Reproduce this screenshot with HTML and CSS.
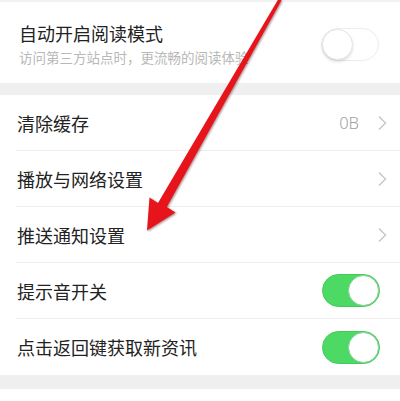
FILE: index.html
```html
<!DOCTYPE html>
<html lang="zh-CN">
<head>
<meta charset="utf-8">
<title>设置</title>
<link rel="stylesheet" href="styles.css">
</head>
<body>
<div class="page">
  <div class="band band-top"></div>
  <section class="group">
    <div class="reader">
      <div class="reader-text">
        <div class="title">自动开启阅读模式</div>
        <div class="subtitle">访问第三方站点时，更流畅的阅读体验</div>
      </div>
      <span class="switch switch-off"><span class="knob"></span></span>
    </div>
  </section>
  <div class="band"></div>
  <section class="group">
    <div class="row">
      <span class="label">清除缓存</span>
      <span class="value">0B</span>
      <svg class="chev" viewBox="0 0 10 16" width="10" height="16"><path d="M2 1.5 L8.5 8 L2 14.5" fill="none" stroke="#c9c9c9" stroke-width="1.5"/></svg>
    </div>
    <div class="row">
      <span class="label">播放与网络设置</span>
      <svg class="chev" viewBox="0 0 10 16" width="10" height="16"><path d="M2 1.5 L8.5 8 L2 14.5" fill="none" stroke="#c9c9c9" stroke-width="1.5"/></svg>
    </div>
    <div class="row">
      <span class="label">推送通知设置</span>
      <svg class="chev" viewBox="0 0 10 16" width="10" height="16"><path d="M2 1.5 L8.5 8 L2 14.5" fill="none" stroke="#c9c9c9" stroke-width="1.5"/></svg>
    </div>
    <div class="row row-switch">
      <span class="label">提示音开关</span>
      <span class="switch switch-on"><span class="knob"></span></span>
    </div>
    <div class="row row-switch row-last">
      <span class="label">点击返回键获取新资讯</span>
      <span class="switch switch-on"><span class="knob"></span></span>
    </div>
  </section>
  <div class="band band-bottom"></div>
  <div class="tail"></div>

  <svg class="arrow" viewBox="0 0 400 401" width="400" height="401">
    <polygon points="279,-2 282.8,-2 166.8,207 175.5,212.5 147,230.5 149.5,197.5 158,203" fill="#e8141b"/>
  </svg>
</div>
</body>
</html>
```

FILE: styles.css
```css
* { box-sizing: border-box; }
html, body {
  margin: 0;
  padding: 0;
  background: #ffffff;
}
body {
  font-family: "Noto Sans CJK SC", "Noto Sans", sans-serif;
  color: #222222;
  width: 400px;
  height: 401px;
  overflow: hidden;
}
.page {
  position: relative;
  width: 400px;
}
.band {
  height: 12px;
  background: #efefef;
}
.band-top { height: 2px; background: #f2f2f2; }
.band-bottom { height: 14px; }
.tail { height: 12px; background: #fff; }
.group { background: #fff; }

.reader {
  height: 81px;
  display: flex;
  align-items: center;
  padding: 0 21px 0 19px;
}
.reader-text {
  flex: 1;
  display: flex;
  flex-direction: column;
  gap: 3px;
  padding-top: 2px;
}
.title {
  font-size: 18px;
  line-height: 24px;
  color: #222;
}
.subtitle {
  font-size: 13.5px;
  line-height: 18px;
  color: #b8b8b8;
  white-space: nowrap;
}

.row {
  height: 56px;
  margin-left: 16px;
  padding: 0 13px 0 1px;
  display: flex;
  align-items: center;
  border-bottom: 1px solid #ededed;
}
.row-switch { padding-right: 20px; }
.row-last { border-bottom: none; }
.label {
  flex: 1;
  font-size: 18px;
  line-height: 24px;
  color: #222;
}
.value {
  font-size: 16.5px;
  color: #a0a0a0;
  margin-right: 18px;
  font-family: "Noto Sans", sans-serif;
  font-weight: 300;
}
.chev { display: block; }

.switch {
  position: relative;
  width: 58px;
  height: 33px;
  border-radius: 17px;
  flex: none;
}
.switch-on {
  background: #4cd964;
  border: 1px solid #46c95c;
}
.switch-on .knob {
  position: absolute;
  right: 0;
  top: 0;
  width: 31px;
  height: 31px;
  border-radius: 50%;
  background: #fff;
  border: 1px solid #8ccf98;
}
.switch-off {
  background: #fff;
  border: 1px solid #ececec;
  margin-top: 4px;
}
.switch-off .knob {
  position: absolute;
  left: 0;
  top: 0;
  width: 31px;
  height: 31px;
  border-radius: 50%;
  background: #fff;
  border: 1px solid #e4e4e4;
  box-shadow: 0 2px 3px rgba(0,0,0,0.12);
}

.arrow {
  position: absolute;
  left: 0;
  top: 0;
  pointer-events: none;
  filter: drop-shadow(1.5px 1.5px 1px rgba(60,0,0,0.45));
}
```
